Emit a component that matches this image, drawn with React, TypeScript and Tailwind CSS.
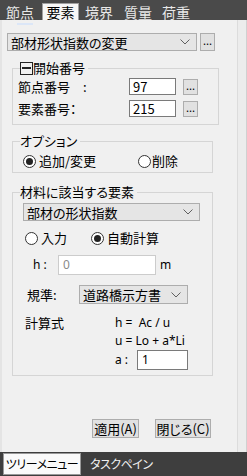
import React from "react";

const font = {
  fontFamily: '"Noto Sans CJK JP", "Noto Sans", sans-serif',
  fontFeatureSettings: '"palt"',
} as React.CSSProperties;

const latin = { fontFamily: '"Noto Sans", sans-serif' } as React.CSSProperties;

function Chevron() {
  return (
    <svg width="10" height="6" viewBox="0 0 10 6" className="shrink-0">
      <path d="M0.5 0.5 L5 5 L9.5 0.5" fill="none" stroke="#606060" strokeWidth="1" />
    </svg>
  );
}

function Combo({ text, className }: { text: string; className: string }) {
  return (
    <div
      className={
        "flex items-center justify-between bg-[#e5e5e5] border border-[#adadad] pl-[3px] pr-[6px] text-[13px] leading-none text-black " +
        className
      }
    >
      <span>{text}</span>
      <Chevron />
    </div>
  );
}

function Dots({ className }: { className: string }) {
  return (
    <div
      className={
        "flex items-center justify-center bg-[#e1e1e1] border border-[#adadad] text-[11px] leading-none text-black pb-[3px] " +
        className
      }
    >
      ...
    </div>
  );
}

function Radio({ checked }: { checked?: boolean }) {
  return (
    <span className="w-[13px] h-[13px] rounded-full border border-[#333] bg-white flex items-center justify-center shrink-0">
      {checked && <span className="w-[7px] h-[7px] rounded-full bg-[#222]" />}
    </span>
  );
}

export default function App() {
  return (
    <div className="w-[247px] h-[476px] flex flex-col bg-[#444]" style={font}>
      {/* top tabs */}
      <div className="h-[20px] flex items-end bg-[#4a4a4a] text-[14px] leading-none text-[#e8e8e8] shrink-0">
        <div className="w-[40px] h-[17px] flex items-center justify-center">節点</div>
        <div className="w-[37px] h-[17px] ml-[2px] flex items-center justify-center bg-[#f7f7f7] text-black border border-b-0 border-[#a0a0a0]">
          要素
        </div>
        <div className="w-[40px] h-[17px] flex items-center justify-center">境界</div>
        <div className="w-[38px] h-[17px] flex items-center justify-center">質量</div>
        <div className="w-[38px] h-[17px] flex items-center justify-center">荷重</div>
      </div>

      {/* main panel */}
      <div className="h-[432px] bg-[#f0f0f0] border-l-2 border-[#e4e4e4] flex shrink-0">
        <div className="flex-1 flex flex-col border-r border-[#dcdcdc] text-[13px] text-black">
          <div className="h-[2px] w-[16px] ml-[15px] mt-[3px] bg-[#dbe6f7]" />
          <div className="flex mt-[8px] ml-[5px] items-center">
            <Combo text="部材形状指数の変更" className="w-[190px] h-[18px]" />
            <Dots className="w-[15px] h-[18px] ml-[3px]" />
          </div>

          {/* 開始番号 */}
          <fieldset className="ml-[10px] w-[207px] mt-[10px] border border-[#d5d5d5] pb-[7px]">
            <legend className="ml-[7px] pr-[3px] flex items-center leading-[14px]">
              <span className="w-[13px] h-[13px] border border-[#222] flex items-center justify-center">
                <span className="w-[9px] h-[1.5px] bg-[#222]" />
              </span>
              <span>開始番号</span>
            </legend>
            <div className="flex items-center mt-[3px] pl-[5px] h-[17px]">
              <span className="w-[65px]">節点番号</span>
              <span className="w-[46px]">:</span>
              <div className="w-[47px] h-[17px] bg-white border border-[#7a7a7a] pl-[3px] flex items-center leading-none">97</div>
              <Dots className="w-[15px] h-[16px] ml-[7px]" />
            </div>
            <div className="flex items-center mt-[5px] pl-[5px] h-[17px]">
              <span className="w-[111px]">要素番号：</span>
              <div className="w-[47px] h-[17px] bg-white border border-[#7a7a7a] pl-[3px] flex items-center leading-none">215</div>
              <Dots className="w-[15px] h-[16px] ml-[7px]" />
            </div>
          </fieldset>

          {/* オプション */}
          <fieldset className="ml-[10px] w-[201px] mt-[10px] border border-[#d5d5d5] pb-[4px]">
            <legend className="ml-[7px] pr-[3px] leading-[12px] h-[12px]">オプション</legend>
            <div className="flex items-center h-[14px] mt-[7px] pl-[10px] leading-[14px]">
              <Radio checked />
              <span className="ml-[3px] w-[99px]">追加/変更</span>
              <Radio />
              <span className="ml-[1px]">削除</span>
            </div>
          </fieldset>

          {/* 材料に該当する要素 */}
          <fieldset className="ml-[10px] w-[201px] mt-[12px] border border-[#d5d5d5] pb-[5px]">
            <legend className="ml-[7px] pr-[3px] leading-[14px]">材料に該当する要素</legend>
            <Combo text="部材の形状指数" className="w-[177px] h-[18px] ml-[10px] mt-[4px]" />
            <div className="flex items-center h-[14px] mt-[10px] pl-[12px]">
              <Radio />
              <span className="ml-[3px] w-[50px]">入力</span>
              <Radio checked />
              <span className="ml-[3px]">自動計算</span>
            </div>
            <div className="flex items-center h-[20px] mt-[10px] pl-[20px]">
              <span className="w-[25px] text-[12px]" style={latin}>h :</span>
              <div className="w-[98px] h-[20px] bg-white border border-[#cccccc] pl-[4px] flex items-center text-[12px] text-[#8a8a8a] leading-none" style={latin}>0</div>
              <span className="ml-[4px] text-[12px]" style={latin}>m</span>
            </div>
            <div className="flex items-center h-[19px] mt-[10px] pl-[14px]">
              <span className="w-[52px]">規準:</span>
              <Combo text="道路橋示方書" className="w-[109px] h-[19px]" />
            </div>
            <div className="flex items-center h-[16px] mt-[11px] pl-[12px]">
              <span className="w-[90px]">計算式</span>
              <span className="text-[12px]" style={latin}>h =&nbsp; Ac / u</span>
            </div>
            <div className="flex items-center h-[14px] mt-[3px] pl-[102px]">
              <span className="text-[12px]" style={latin}>u = Lo + a*Li</span>
            </div>
            <div className="flex items-center h-[20px] mt-[2px] pl-[102px]">
              <span className="w-[22px] text-[12px]" style={latin}>a :</span>
              <div className="w-[51px] h-[20px] bg-white border border-[#7a7a7a] pl-[4px] flex items-center text-[12px] leading-none" style={latin}>1</div>
            </div>
          </fieldset>

          <div className="flex mt-[43px] pl-[90px]">
            <div className="w-[47px] h-[19px] bg-[#e1e1e1] border border-[#adadad] flex items-center justify-center leading-none">適用(A)</div>
            <div className="w-[56px] h-[19px] ml-[16px] bg-[#e1e1e1] border border-[#adadad] flex items-center justify-center leading-none">閉じる(C)</div>
          </div>
        </div>
        <div className="w-[9px] bg-[#ececec] border-r border-[#d0d0d0]" />
      </div>

      {/* bottom tabs */}
      <div className="flex-1 flex items-start bg-[#3e3e3e] text-[12px] leading-none">
        <div className="ml-[3px] mt-[1px] w-[78px] h-[22px] bg-[#fafafa] border border-[#999] flex items-center justify-center text-black tracking-[-0.5px] whitespace-nowrap">
          ツリーメニュー
        </div>
        <div className="ml-[9px] h-[23px] flex items-center text-[#f0f0f0] tracking-[-0.5px]">タスクペイン</div>
      </div>
    </div>
  );
}
